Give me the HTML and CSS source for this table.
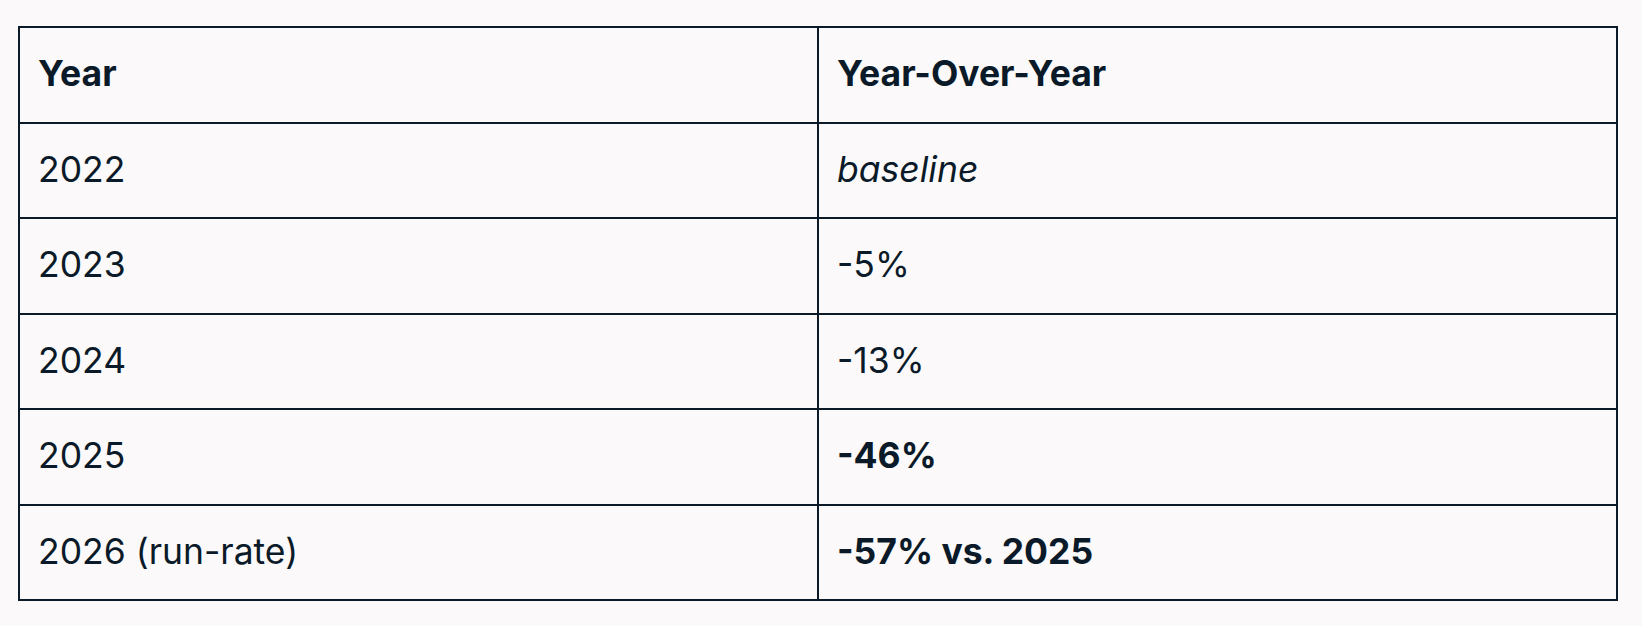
FILE: index.html
```html
<!DOCTYPE html>
<html lang="en">
<head>
<meta charset="utf-8">
<title>Year-Over-Year</title>
<link rel="stylesheet" href="styles.css">
</head>
<body>
<table class="yoy">
  <thead>
    <tr><th>Year</th><th>Year-Over-Year</th></tr>
  </thead>
  <tbody>
    <tr><td>2022</td><td><em>baseline</em></td></tr>
    <tr><td>2023</td><td>-5%</td></tr>
    <tr><td>2024</td><td>-13%</td></tr>
    <tr><td>2025</td><td><strong>-46%</strong></td></tr>
    <tr><td>2026 (run-rate)</td><td><strong>-57% vs. 2025</strong></td></tr>
  </tbody>
</table>
</body>
</html>
```
FILE: styles.css
```css
html, body {
  background: #fbf9fa;
}
body {
  margin: 0;
  padding: 26px 24px 0 18px;
  font-family: "Inter", "Liberation Sans", sans-serif;
  color: #0b1a28;
}
.yoy {
  width: 100%;
  border-collapse: collapse;
  table-layout: fixed;
  font-size: 35.5px;
}
.yoy th, .yoy td {
  border: 2px solid #0b1a28;
  padding: 0 18px;
  height: 93.5px;
  text-align: left;
  vertical-align: middle;
  line-height: 1.2;
}
.yoy th {
  font-weight: 700;
}
.yoy strong {
  font-weight: 700;
}
.yoy em {
  font-style: italic;
}
```
